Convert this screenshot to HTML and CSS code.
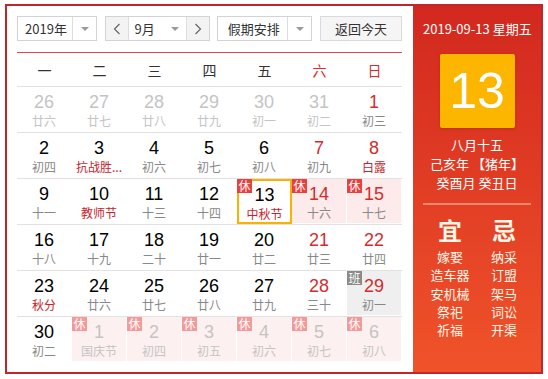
FILE: index.html
```html
<!DOCTYPE html>
<html lang="zh-CN">
<head>
  <meta charset="UTF-8" />
  <title>万年历</title>
  <link rel="stylesheet" href="styles.css">
</head>
<body>
  <div class="calendar">
    <div class="main">
      <div class="toolbar">
        <div class="select year">
          <span class="select-text">2019年</span>
          <span class="select-arrow"><i class="caret"></i></span>
        </div>
        <div class="select month">
          <span class="nav-btn">
            <svg width="8" height="12" viewBox="0 0 8 12"><polyline points="6.5,1 1.5,6 6.5,11" fill="none" stroke="#666" stroke-width="1.2"/></svg>
          </span>
          <span class="month-text">9月</span>
          <span class="month-arrow"><i class="caret"></i></span>
          <span class="nav-btn next">
            <svg width="8" height="12" viewBox="0 0 8 12"><polyline points="1.5,1 6.5,6 1.5,11" fill="none" stroke="#666" stroke-width="1.2"/></svg>
          </span>
        </div>
        <div class="select holiday">
          <span class="select-text">假期安排</span>
          <span class="select-arrow"><i class="caret"></i></span>
        </div>
        <div class="today-btn">返回今天</div>
      </div>

      <div class="weekdays">
        <span>一</span><span>二</span><span>三</span><span>四</span><span>五</span>
        <span class="red">六</span><span class="red">日</span>
      </div>

      <div class="week">
        <div class="day other"><span class="num">26</span><span class="lunar">廿六</span></div>
        <div class="day other"><span class="num">27</span><span class="lunar">廿七</span></div>
        <div class="day other"><span class="num">28</span><span class="lunar">廿八</span></div>
        <div class="day other"><span class="num">29</span><span class="lunar">廿九</span></div>
        <div class="day other"><span class="num">30</span><span class="lunar">初一</span></div>
        <div class="day other"><span class="num">31</span><span class="lunar">初二</span></div>
        <div class="day wkd"><span class="num">1</span><span class="lunar">初三</span></div>
      </div>
      <div class="week">
        <div class="day"><span class="num">2</span><span class="lunar">初四</span></div>
        <div class="day fest"><span class="num">3</span><span class="lunar">抗战胜...</span></div>
        <div class="day"><span class="num">4</span><span class="lunar">初六</span></div>
        <div class="day"><span class="num">5</span><span class="lunar">初七</span></div>
        <div class="day"><span class="num">6</span><span class="lunar">初八</span></div>
        <div class="day wkd"><span class="num">7</span><span class="lunar">初九</span></div>
        <div class="day wkd fest"><span class="num">8</span><span class="lunar">白露</span></div>
      </div>
      <div class="week">
        <div class="day"><span class="num">9</span><span class="lunar">十一</span></div>
        <div class="day fest"><span class="num">10</span><span class="lunar">教师节</span></div>
        <div class="day"><span class="num">11</span><span class="lunar">十三</span></div>
        <div class="day"><span class="num">12</span><span class="lunar">十四</span></div>
        <div class="day rest today fest"><i class="badge">休</i><span class="num">13</span><span class="lunar">中秋节</span></div>
        <div class="day rest wkd"><i class="badge">休</i><span class="num">14</span><span class="lunar">十六</span></div>
        <div class="day rest wkd"><i class="badge">休</i><span class="num">15</span><span class="lunar">十七</span></div>
      </div>
      <div class="week">
        <div class="day"><span class="num">16</span><span class="lunar">十八</span></div>
        <div class="day"><span class="num">17</span><span class="lunar">十九</span></div>
        <div class="day"><span class="num">18</span><span class="lunar">二十</span></div>
        <div class="day"><span class="num">19</span><span class="lunar">廿一</span></div>
        <div class="day"><span class="num">20</span><span class="lunar">廿二</span></div>
        <div class="day wkd"><span class="num">21</span><span class="lunar">廿三</span></div>
        <div class="day wkd"><span class="num">22</span><span class="lunar">廿四</span></div>
      </div>
      <div class="week">
        <div class="day fest"><span class="num">23</span><span class="lunar">秋分</span></div>
        <div class="day"><span class="num">24</span><span class="lunar">廿六</span></div>
        <div class="day"><span class="num">25</span><span class="lunar">廿七</span></div>
        <div class="day"><span class="num">26</span><span class="lunar">廿八</span></div>
        <div class="day"><span class="num">27</span><span class="lunar">廿九</span></div>
        <div class="day wkd"><span class="num">28</span><span class="lunar">三十</span></div>
        <div class="day wkd work"><i class="badge">班</i><span class="num">29</span><span class="lunar">初一</span></div>
      </div>
      <div class="week last">
        <div class="day"><span class="num">30</span><span class="lunar">初二</span></div>
        <div class="day other rest"><i class="badge">休</i><span class="num">1</span><span class="lunar">国庆节</span></div>
        <div class="day other rest"><i class="badge">休</i><span class="num">2</span><span class="lunar">初四</span></div>
        <div class="day other rest"><i class="badge">休</i><span class="num">3</span><span class="lunar">初五</span></div>
        <div class="day other rest"><i class="badge">休</i><span class="num">4</span><span class="lunar">初六</span></div>
        <div class="day other rest"><i class="badge">休</i><span class="num">5</span><span class="lunar">初七</span></div>
        <div class="day other rest"><i class="badge">休</i><span class="num">6</span><span class="lunar">初八</span></div>
      </div>
    </div>

    <div class="side">
      <div class="side-date">2019-09-13 星期五</div>
      <div class="big-day">13</div>
      <div class="side-lunar">
        <div>八月十五</div>
        <div>己亥年 【猪年】</div>
        <div>癸酉月 癸丑日</div>
      </div>
      <div class="almanac">
        <div class="almanac-col">
          <div class="almanac-title">宜</div>
          <div>嫁娶</div>
          <div>造车器</div>
          <div>安机械</div>
          <div>祭祀</div>
          <div>祈福</div>
        </div>
        <div class="almanac-col">
          <div class="almanac-title">忌</div>
          <div>纳采</div>
          <div>订盟</div>
          <div>架马</div>
          <div>词讼</div>
          <div>开渠</div>
        </div>
      </div>
    </div>
  </div>
</body>
</html>
```

FILE: styles.css
```css
:root {
  --red: #d42c2c;
  --fest: #c8232c;
  --line: #e2e2e2;
  --text: #333;
  --muted: #888;
}

body {
  margin: 0;
  background: #fff;
  font-family: "Noto Sans CJK SC", "Liberation Sans", sans-serif;
  color: var(--text);
}

.calendar {
  margin: 4px 0 0 5px;
  width: 538px;
  height: 370px;
  box-sizing: border-box;
  border: 2px solid #c0272d;
  display: flex;
}

.main {
  width: 406px;
  padding: 10px 11px 0 10px;
  box-sizing: border-box;
}

/* toolbar */
.toolbar {
  display: flex;
  justify-content: space-between;
  height: 25px;
  margin-bottom: 11px;
}

.select,
.today-btn {
  display: flex;
  align-items: center;
  box-sizing: border-box;
  height: 25px;
  border: 1px solid #d3d3d3;
  font-size: 13px;
  color: var(--text);
  background: #fff;
}

.year { width: 80px; }
.month { width: 105px; }
.holiday { width: 95px; }

.select-text {
  flex: 1;
  text-align: center;
  padding-left: 2px;
}

.select-arrow {
  width: 23px;
  height: 100%;
  border-left: 1px solid #ddd;
  display: flex;
  align-items: center;
  justify-content: center;
}

.caret {
  width: 0;
  height: 0;
  border-left: 4px solid transparent;
  border-right: 4px solid transparent;
  border-top: 4px solid #999;
}

.nav-btn {
  width: 22px;
  height: 100%;
  background: #f3f3f3;
  border-right: 1px solid #ddd;
  display: flex;
  align-items: center;
  justify-content: center;
}

.nav-btn.next {
  border-right: none;
  border-left: 1px solid #ddd;
}

.month-text {
  flex: 1;
  text-align: right;
  padding-right: 9px;
}

.month-arrow {
  width: 22px;
  display: flex;
  justify-content: center;
}

.today-btn {
  width: 82px;
  justify-content: center;
  background: #f5f5f5;
  border-color: #dadada;
}

/* grid */
.weekdays {
  display: grid;
  grid-template-columns: repeat(7, 1fr);
  height: 35px;
  box-sizing: border-box;
  border-top: 1px solid #e2474a;
  border-bottom: 1px solid var(--line);
  align-items: center;
  text-align: center;
  font-size: 14px;
}

.weekdays .red { color: var(--red); }

.week {
  display: grid;
  grid-template-columns: repeat(7, 1fr);
  border-bottom: 1px solid var(--line);
}

.week.last { border-bottom: none; }

.day {
  position: relative;
  height: 45px;
  box-sizing: border-box;
  padding-top: 5px;
  border-right: 1px solid transparent;
  border-bottom: 1px solid transparent;
  background-clip: padding-box;
  display: flex;
  flex-direction: column;
  align-items: center;
}

.num {
  font-family: "Liberation Sans", sans-serif;
  font-size: 18px;
  line-height: 20px;
  color: #000;
}

.lunar {
  font-size: 12px;
  line-height: 18px;
  color: var(--muted);
}

.wkd .num { color: var(--red); }
.fest .lunar { color: var(--fest); }

.other .num,
.other .lunar { color: #c4c4c4; }

.rest { background-color: #fdeaea; }
.other.rest { background-color: #fdf0f0; }
.work { background-color: #efefef; }

.today {
  background-color: #fff;
  border: 2px solid #f6b400;
  padding-top: 4px;
}

.badge {
  position: absolute;
  top: 0;
  left: 0;
  width: 15px;
  height: 14px;
  font-style: normal;
  font-size: 12px;
  line-height: 14px;
  text-align: center;
  color: #fff;
  background: #e8403f;
}

.today .badge { top: -2px; left: -2px; }
.work .badge { background: #8a8a8a; }
.other .badge { background: #f29a9a; }

/* side panel */
.side {
  width: 128px;
  background: linear-gradient(to bottom, #d2281f, #f0532a);
  color: #fff;
  text-align: center;
  padding: 0 10px;
  box-sizing: border-box;
}

.side-date {
  font-size: 13px;
  line-height: 18px;
  margin-top: 14px;
  white-space: nowrap;
}

.big-day {
  width: 75px;
  height: 74px;
  margin: 16px auto 0;
  background: #fdb600;
  border-radius: 2px;
  box-shadow: 0 1px 3px rgba(120, 40, 0, 0.3);
  font-family: "Liberation Sans", sans-serif;
  font-size: 50px;
  line-height: 74px;
  color: #fff;
}

.side-lunar {
  margin-top: 7px;
  font-size: 13px;
  line-height: 19px;
  padding-bottom: 11px;
  border-bottom: 2px solid #f08a6c;
}

.almanac {
  display: flex;
  margin-top: 10px;
  font-size: 13px;
  line-height: 18.3px;
  color: #fff6e6;
}

.almanac-col { flex: 1; }

.almanac-title {
  font-size: 24px;
  font-weight: bold;
  line-height: 30px;
  margin-bottom: 3px;
}
```
